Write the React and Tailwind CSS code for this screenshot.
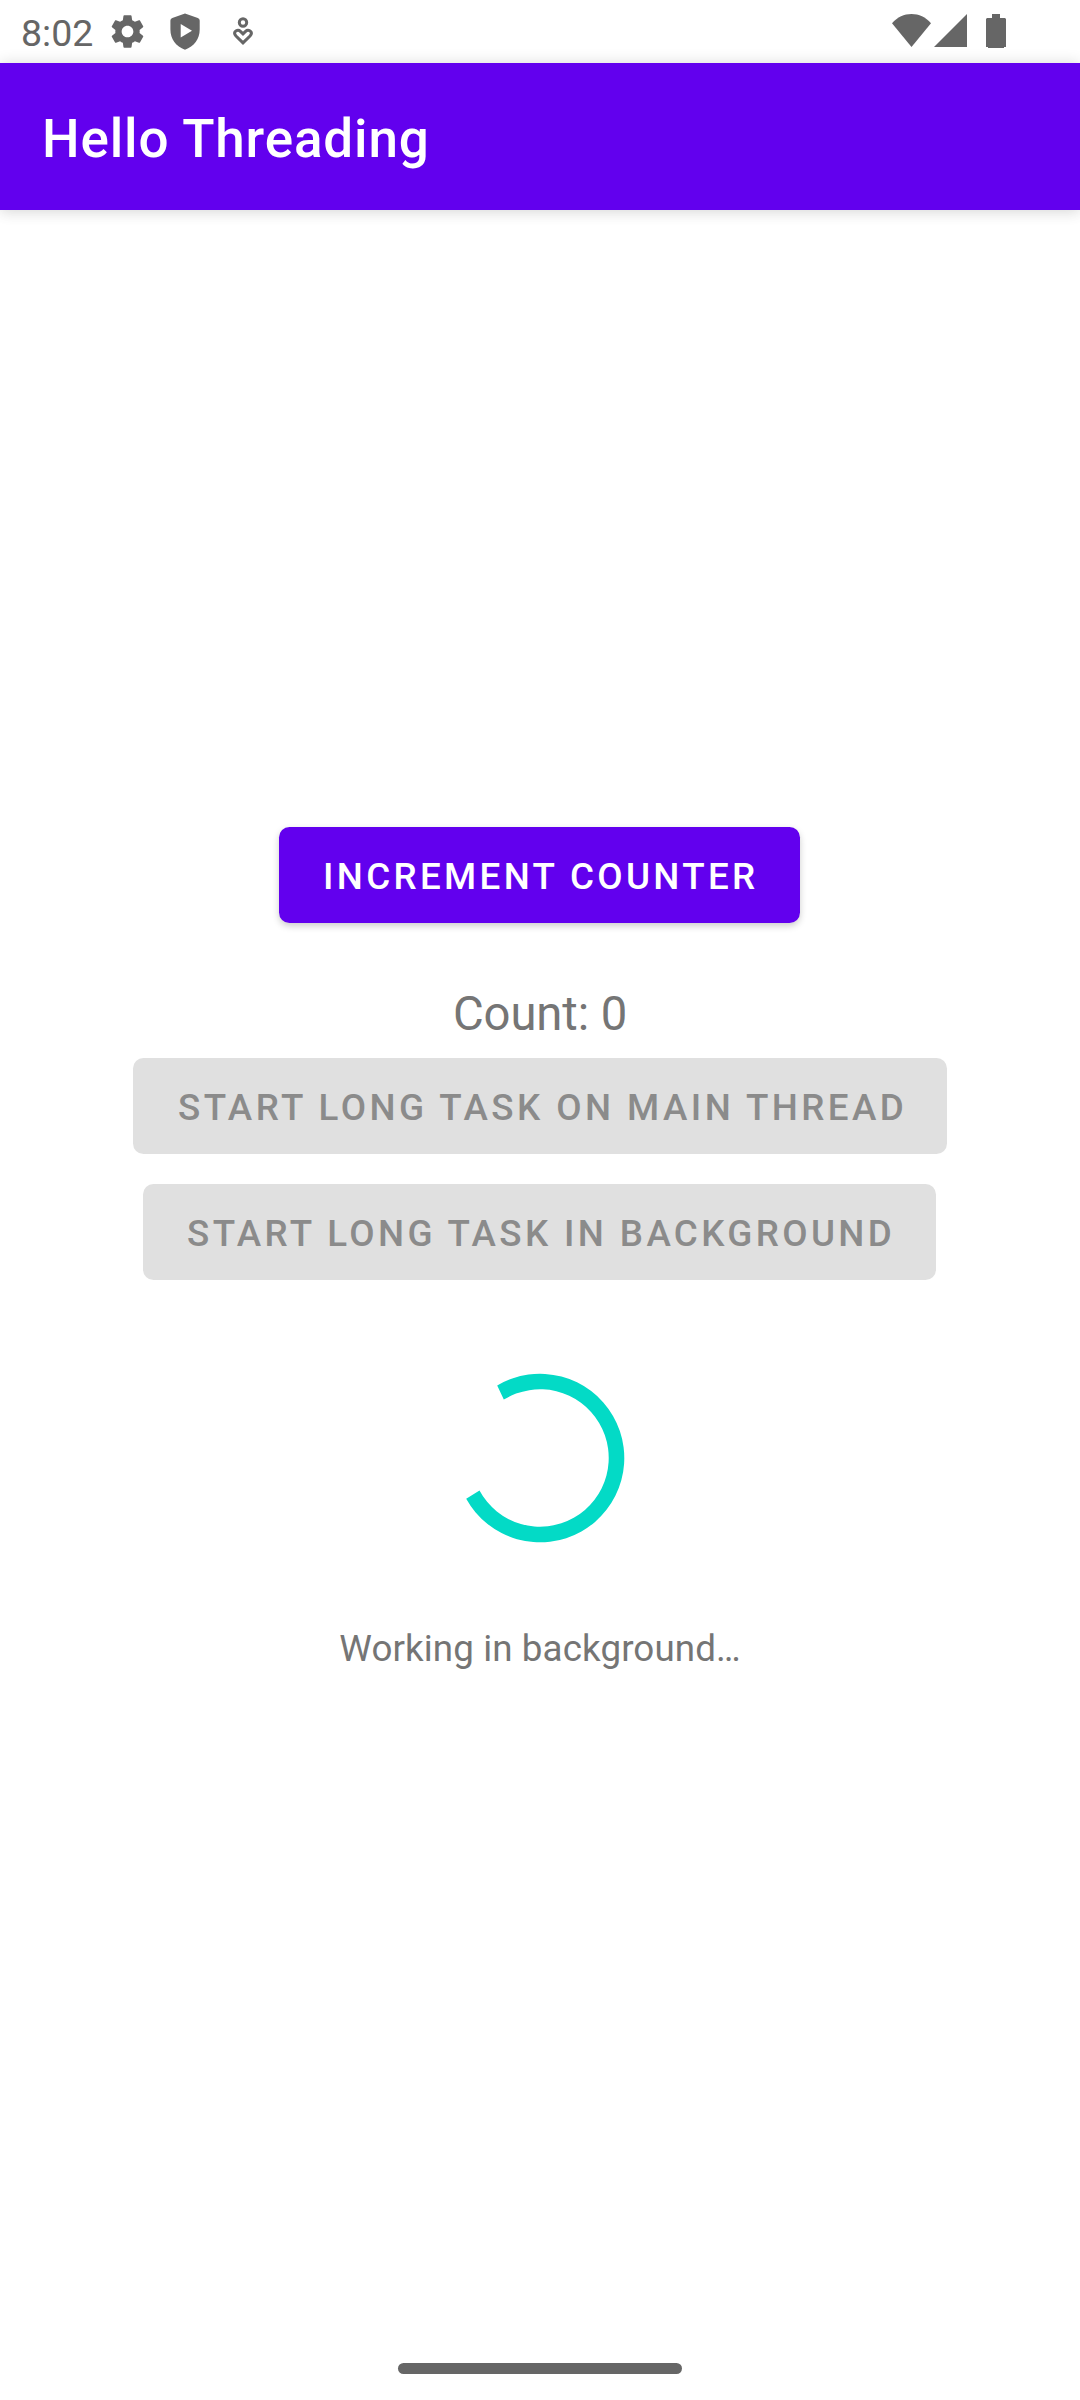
import React from "react";

function StatusBar() {
  return (
    <div className="flex h-[63px] items-start justify-between pl-[21px] pr-[72px] text-[#666666]">
      <div className="flex items-start">
        <span className="mt-[12px] w-[86.5px] text-[37.5px] leading-[42px]">8:02</span>
        <svg className="mt-[12px] h-[39px] w-[39px]" viewBox="0 0 24 24" fill="currentColor">
          <path d="M19.430 12.980c.040-.320.070-.640.070-.980s-.030-.660-.070-.980l2.110-1.650c.190-.150.240-.420.120-.640l-2-3.460c-.120-.220-.390-.300-.610-.220l-2.490 1c-.520-.400-1.080-.730-1.690-.980l-.380-2.650C14.460 2.180 14.250 2 14 2h-4c-.250 0-.460.180-.490.420l-.380 2.650c-.610.250-1.170.590-1.690.980l-2.490-1c-.230-.090-.490 0-.610.220l-2 3.460c-.130.220-.070.490.120.640l2.110 1.650c-.040.320-.070.650-.070.980s.030.660.070.980l-2.110 1.650c-.190.150-.240.420-.120.640l2 3.460c.120.220.390.300.610.220l2.490-1c.520.400 1.080.730 1.690.980l.380 2.650c.030.240.240.420.490.420h4c.250 0 .460-.180.490-.420l.380-2.650c.610-.250 1.170-.590 1.690-.980l2.490 1c.230.090.490 0 .610-.220l2-3.460c.120-.220.070-.490-.120-.640l-2.110-1.650zM12 15.600c-1.980 0-3.600-1.620-3.600-3.600s1.620-3.600 3.600-3.600 3.600 1.620 3.600 3.600-1.620 3.600-3.600 3.600z" />
        </svg>
        <svg className="mt-[13px] ml-[23.5px] h-[37px] w-[30px]" viewBox="0 0 30 37" fill="currentColor" fillRule="evenodd">
          <path d="M15 .5 27.8 5Q29.7 5.7 29.7 7.6V16.5C29.7 26 24 33.5 15 36.8 6 33.5 .4 26 .4 16.5V7.6Q.4 5.7 2.3 5ZM10.7 11V24.5L22 17.7Z" />
        </svg>
        <svg className="mt-[17px] ml-[33px] h-[28px] w-[20px]" viewBox="0 0 20 28" fill="none" stroke="currentColor" strokeWidth="3">
          <circle cx="10" cy="5.500" r="3.700" />
          <path d="M10 25.800 3 19C1.200 17 1.200 15.700 2.300 14.500 3.800 13 6 13 7.400 14.300L10 16.800 12.600 14.300C14 13 16.200 13 17.700 14.500 18.800 15.700 18.800 17 17 19Z" />
        </svg>
      </div>
      <div className="flex items-start pt-[14px]">
        <svg className="h-[33px] w-[39px]" viewBox="0 0 39 33" fill="currentColor">
          <path d="M19.500 33 0 9.200C5.500 3 12 0 19.500 0S33.500 3 39 9.200Z" />
        </svg>
        <svg className="ml-[3px] h-[33px] w-[33px]" viewBox="0 0 33 33" fill="currentColor">
          <path d="M33 0V33H0Z" />
        </svg>
        <svg className="ml-[19px] mr-[2px] h-[34px] w-[20px]" viewBox="0 0 20 34" fill="currentColor">
          <path d="M6 0H14V4H19L20 5V33H18V34H2V33H0V5L1 4H6Z" />
        </svg>
      </div>
    </div>
  );
}

function Button({ children, className }) {
  return (
    <button
      className={
        "flex h-[96px] items-center whitespace-nowrap rounded-[10.5px] pt-[2px] text-[36.75px] font-medium leading-[43px] " +
        className
      }
    >
      {children}
    </button>
  );
}

export default function App() {
  return (
    <div className="flex h-[2400px] w-[1080px] flex-col overflow-hidden bg-white font-['Roboto',sans-serif]">
      <StatusBar />
      <header className="flex h-[147px] shrink-0 items-center bg-[#6200ee] pl-[42px] pt-[5px] shadow-[0_0_14px_rgba(0,0,0,0.14),0_6px_14px_rgba(0,0,0,0.04)]">
        <h1 className="text-[53px] font-medium leading-[62px] tracking-[0.85px] text-white">Hello Threading</h1>
      </header>
      <main className="flex flex-1 flex-col items-center pt-[617px]">
        <Button className="mr-px w-[521px] bg-[#6200ee] pl-[44px] tracking-[3.34px] text-white shadow-[0_3px_7px_rgba(0,0,0,0.2)]">INCREMENT COUNTER</Button>
        <p className="mt-[63px] h-[72px] text-[47.25px] leading-[56px] tracking-[-0.1px] text-[#757575]">Count: 0</p>
        <Button className="w-[814px] bg-[#e0e0e0] pl-[45px] tracking-[3.45px] text-[#8b8b8b]">START LONG TASK ON MAIN THREAD</Button>
        <Button className="mr-px mt-[30px] w-[793px] bg-[#e0e0e0] pl-[44px] tracking-[3.38px] text-[#8b8b8b]">START LONG TASK IN BACKGROUND</Button>
        <svg className="mt-[78px] h-[200px] w-[200px]" viewBox="-100 -100 200 200" fill="#03dac6">
          <path d="M-42.8 -72.6A84.300 84.300 0 1 1 -73.800 40.800L-60.500 32.500A68.700 68.700 0 1 0 -36.200 -58.400Z" />
        </svg>
        <p className="mt-[69px] text-[36.75px] leading-[43px] tracking-[0.1px] text-[#757575]">Working in background…</p>
      </main>
      <div className="flex h-[37px] shrink-0 justify-center">
        <div className="h-[11px] w-[284px] rounded-full bg-[#666666]" />
      </div>
    </div>
  );
}
